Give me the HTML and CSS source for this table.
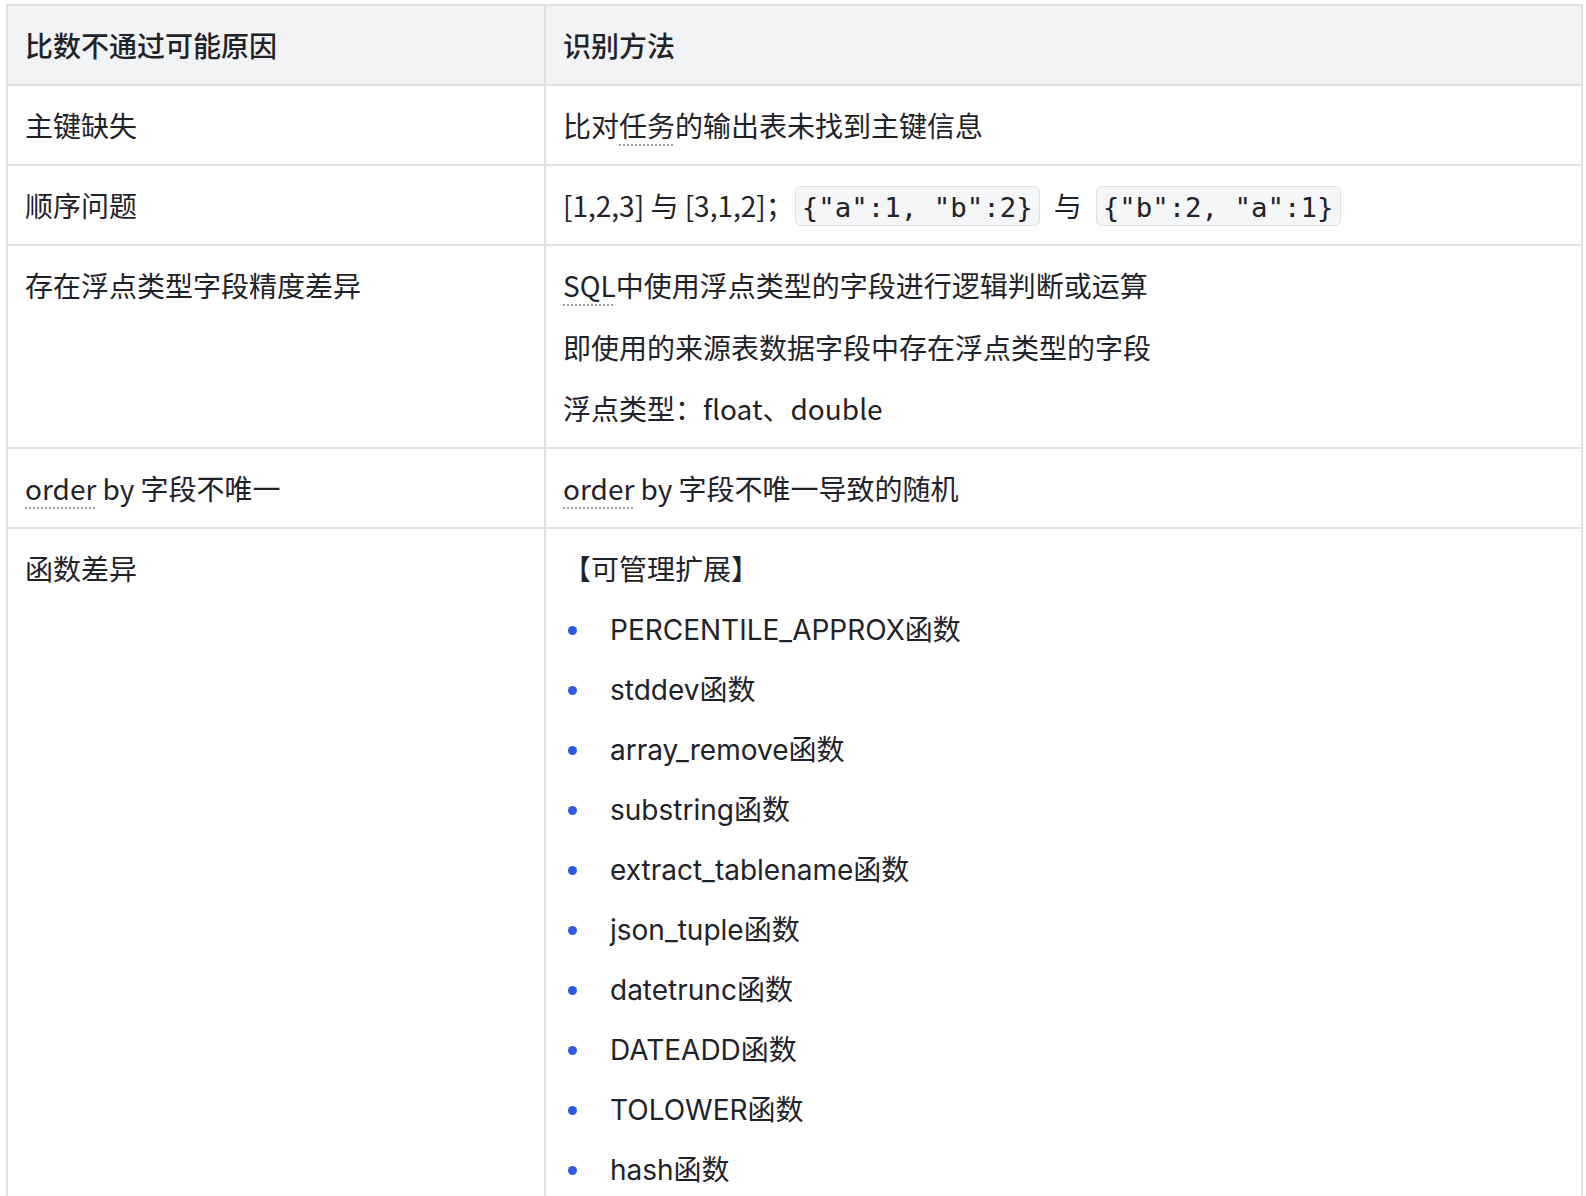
FILE: index.html
```html
<!DOCTYPE html>
<html lang="zh-CN">
<head>
<meta charset="utf-8">
<title>比数不通过可能原因</title>
<link rel="stylesheet" href="styles.css">
</head>
<body>
<table class="doc-table">
  <colgroup>
    <col class="col-reason">
    <col class="col-method">
  </colgroup>
  <thead>
    <tr>
      <th>比数不通过可能原因</th>
      <th>识别方法</th>
    </tr>
  </thead>
  <tbody>
    <tr>
      <td>主键缺失</td>
      <td>比对<span class="spell">任务</span>的输出表未找到主键信息</td>
    </tr>
    <tr>
      <td>顺序问题</td>
      <td>[1,2,3] 与 [3,1,2]；<code class="inline-code first">{"a":1, "b":2}</code>与<code class="inline-code">{"b":2, "a":1}</code></td>
    </tr>
    <tr>
      <td>存在浮点类型字段精度差异</td>
      <td>
        <p class="para"><span class="spell">SQL</span>中使用浮点类型的字段进行逻辑判断或运算</p>
        <p class="para">即使用的来源表数据字段中存在浮点类型的字段</p>
        <p class="para">浮点类型：float、double</p>
      </td>
    </tr>
    <tr>
      <td><span class="spell">order</span> by 字段不唯一</td>
      <td><span class="spell">order</span> by 字段不唯一导致的随机</td>
    </tr>
    <tr>
      <td>函数差异</td>
      <td>
        <p class="para">【可管理扩展】</p>
        <ul class="bullets">
          <li>PERCENTILE_APPROX函数</li>
          <li>stddev函数</li>
          <li>array_remove函数</li>
          <li>substring函数</li>
          <li>extract_tablename函数</li>
          <li>json_tuple函数</li>
          <li>datetrunc函数</li>
          <li>DATEADD函数</li>
          <li>TOLOWER函数</li>
          <li>hash函数</li>
        </ul>
      </td>
    </tr>
  </tbody>
</table>
</body>
</html>
```

FILE: styles.css
```css
html, body {
  margin: 0;
  padding: 0;
  background: #ffffff;
}

body {
  padding: 4px 0 0 6px;
  font-family: "Noto Sans CJK SC", "Noto Sans", sans-serif;
  font-size: 28px;
  color: #1f2329;
}

.doc-table {
  border-collapse: collapse;
  table-layout: fixed;
  width: 1577px;
}

.col-reason {
  width: 538px;
}

.doc-table th,
.doc-table td {
  border: 2px solid #dee0e3;
  padding: 17px 17px;
  text-align: left;
  vertical-align: top;
  line-height: 44px;
}

.doc-table th {
  background: #f2f3f5;
  font-weight: 500;
}

.doc-table td {
  font-weight: 400;
}

.spell {
  text-decoration: underline dotted #9aa0a8;
  text-decoration-thickness: 2px;
  text-underline-offset: 7px;
}

.inline-code {
  font-family: "DejaVu Sans Mono", "Liberation Mono", monospace;
  font-size: 27.4px;
  line-height: 37px;
  padding: 5px 6px 2px;
  margin: 0 14px;
  border: 1px solid #dee0e3;
  border-radius: 6px;
  background: #f5f6f7;
  color: #1f2329;
}

.inline-code.first {
  margin-left: 1px;
}

.para {
  margin: 0;
}

.para + .para {
  margin-top: 17.5px;
}

.bullets {
  list-style: none;
  margin: 18px 0 0 0;
  padding: 0 0 0 47px;
  font-family: "Inter", "Noto Sans CJK SC", sans-serif;
}

.bullets li {
  position: relative;
  line-height: 44px;
  margin-top: 16px;
}

.bullets li:first-child {
  margin-top: 0;
}

.bullets li::before {
  content: "";
  position: absolute;
  left: -42px;
  top: 18px;
  width: 9px;
  height: 9px;
  border-radius: 50%;
  background: #2d5be3;
}
```
